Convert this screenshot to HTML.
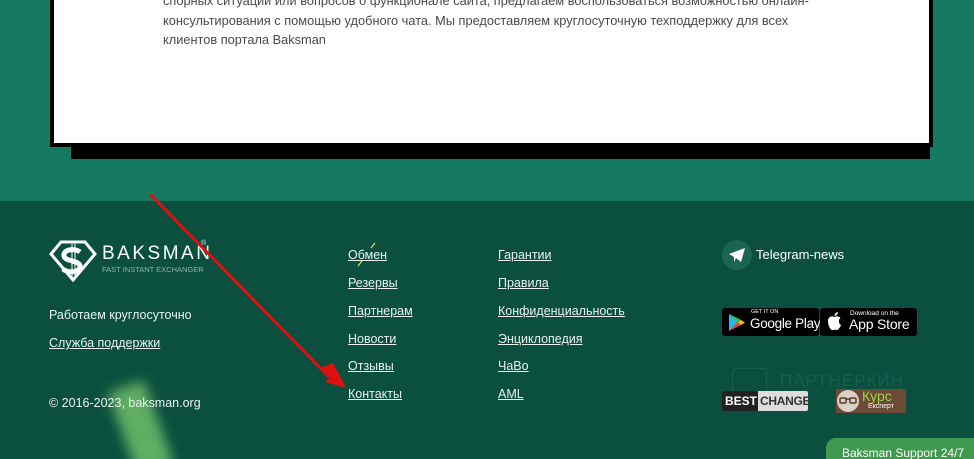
<!DOCTYPE html>
<html><head><meta charset="utf-8"><style>
*{margin:0;padding:0;box-sizing:border-box}
html,body{width:974px;height:459px;overflow:hidden}
body{position:relative;background:#167a62;font-family:"Liberation Sans",sans-serif}
.shadow{position:absolute;left:71px;top:146px;width:859px;height:13px;background:#000}
.card{position:absolute;left:50px;top:-10px;width:883px;height:157px;background:#fff;border:4px solid #000;border-top:0}
.card p{position:absolute;left:109px;top:1px;width:680px;font-size:12.8px;line-height:19.5px;color:#4a4a4a}
.foot{position:absolute;left:0;top:201px;width:974px;height:258px;background:#0b4f3f}
a,.t{position:absolute;color:#e8f2ee;font-size:12.5px;text-decoration:underline;white-space:nowrap}
.t{text-decoration:none}
</style></head><body>
<div class="shadow"></div>
<div class="card"><p>спорных ситуаций или вопросов о функционале сайта, предлагаем воспользоваться возможностью онлайн-консультирования с помощью удобного чата. Мы предоставляем круглосуточную техподдержку для всех клиентов портала Baksman</p></div>
<div class="foot"></div>
<div style="position:absolute;left:122px;top:384px;width:38px;height:90px;background:#6fbf6a;filter:blur(6px);transform:rotate(-20deg);opacity:.85"></div>
<svg style="position:absolute;left:49px;top:240px" width="48" height="42" viewBox="0 0 48 42">
<path d="M12 2 L36 2 L46 14 L24 40 L2 14 Z" fill="none" stroke="#fff" stroke-width="3"/>
<path d="M31 12 C26 8 14 9 15 16 C16 22 32 20 31 27 C30 33 18 33 14 29" fill="none" stroke="#fff" stroke-width="5"/>
<path d="M23 4 V38 M26 4 V38" stroke="#fff" stroke-width="1"/>
</svg>
<div class="t" style="left:102px;top:243px;font-size:19px;letter-spacing:2.5px;color:#fff">BAKSMAN</div>
<div class="t" style="left:102px;top:265px;font-size:7.5px;color:#8fb5a7">FAST INSTANT EXCHANGER</div>
<div class="t" style="left:201px;top:240px;font-size:7px">®</div>
<div class="t" style="left:49px;top:308px">Работаем круглосуточно</div>
<a style="left:49px;top:336px">Служба поддержки</a>
<div class="t" style="left:49px;top:396px">© 2016-2023, baksman.org</div>
<a style="left:348px;top:248px">Обмен</a>
<a style="left:348px;top:276px">Резервы</a>
<a style="left:348px;top:304px">Партнерам</a>
<a style="left:348px;top:332px">Новости</a>
<a style="left:348px;top:359px">Отзывы</a>
<a style="left:348px;top:387px">Контакты</a>
<a style="left:498px;top:248px">Гарантии</a>
<a style="left:498px;top:276px">Правила</a>
<a style="left:498px;top:304px">Конфиденциальность</a>
<a style="left:498px;top:332px">Энциклопедия</a>
<a style="left:498px;top:359px">ЧаВо</a>
<a style="left:498px;top:387px">AML</a>
<div style="position:absolute;left:722px;top:240px;width:30px;height:30px;border-radius:50%;background:#1d6553"></div>
<svg style="position:absolute;left:729px;top:248px" width="16" height="14" viewBox="0 0 16 14"><path d="M0 6 L16 0 L12 14 L7 10 L5 14 L5 9 Z" fill="#fff"/></svg>
<div class="t" style="left:756px;top:247px;font-size:13px;color:#fff">Telegram-news</div>
<div style="position:absolute;left:722px;top:308px;width:97px;height:28px;background:#000;border-radius:3px"></div>
<svg style="position:absolute;left:728px;top:313px" width="18" height="19" viewBox="0 0 18 19"><path d="M1 1 L1 18 L10 9.5Z" fill="#2bb5e8"/><path d="M1 1 L13 7 L10 9.5Z" fill="#34c759"/><path d="M1 18 L13 12 L10 9.5Z" fill="#ea4335"/><path d="M13 7 L17 9.5 L13 12 L10 9.5Z" fill="#fbbc04"/></svg>
<div class="t" style="left:751px;top:309px;font-size:5.5px;color:#fff">GET IT ON</div>
<div class="t" style="left:750px;top:316px;font-size:13.5px;color:#fff;letter-spacing:-.3px">Google Play</div>
<div style="position:absolute;left:820px;top:308px;width:97px;height:28px;background:#000;border-radius:3px"></div>
<svg style="position:absolute;left:827px;top:312px" width="15" height="19" viewBox="0 0 15 19"><path d="M11 0 C11 2 9 4 7.5 4 C7.5 2 9 0.5 11 0Z M7.5 5 C5 3.5 1 4.5 1 9 C1 14 4 19 6 18 C7 17.5 8 17.5 9 18 C11 19 14 14 14 13 C11 11.5 11.5 7 13.5 6 C12 4 9.5 4 7.5 5Z" fill="#fff"/></svg>
<div class="t" style="left:850px;top:310px;font-size:6.5px;color:#fff">Download on the</div>
<div class="t" style="left:849px;top:316px;font-size:14px;color:#fff;letter-spacing:-.2px">App Store</div>
<div class="t" style="left:732px;top:368px;width:35px;height:28px;border:1px solid #1b5f4e;border-radius:3px"></div>
<div class="t" style="left:780px;top:371px;font-size:17px;color:#16604d;letter-spacing:1px">ПАРТНЕРКИН</div>
<div style="position:absolute;left:722px;top:391px;width:86px;height:20px;background:#222;border-radius:2px;overflow:hidden;font:bold 12px 'Liberation Sans',sans-serif;line-height:20px"><span style="color:#fff;padding-left:3px">BEST</span><span style="position:absolute;left:36px;top:0;width:50px;height:20px;background:#ddd;color:#333;padding-left:2px;letter-spacing:-.3px">CHANGE</span></div>
<div style="position:absolute;left:836px;top:389px;width:70px;height:24px;background:#6b4a36"></div>
<div style="position:absolute;left:837px;top:390px;width:22px;height:22px;border-radius:50%;background:#d9d0c8"></div>
<svg style="position:absolute;left:839px;top:396px" width="18" height="9" viewBox="0 0 18 9"><rect x="1" y="2" width="6" height="5" rx="1" fill="none" stroke="#5a3a2a" stroke-width="1.5"/><rect x="11" y="2" width="6" height="5" rx="1" fill="none" stroke="#5a3a2a" stroke-width="1.5"/><path d="M7 3 H11" stroke="#5a3a2a" stroke-width="1.5"/></svg>
<div class="t" style="left:862px;top:388px;font-size:14px;color:#9ed24a">Курс</div>
<div class="t" style="left:868px;top:403px;font-size:7px;color:#fff">Експерт</div>
<div style="position:absolute;left:826px;top:438px;width:160px;height:30px;background:#3f9a4f;border-radius:10px"></div>
<div class="t" style="left:842px;top:446px;font-size:12px;color:#fff">Baksman Support 24/7</div>
<svg style="position:absolute;left:0;top:0" width="974" height="459"><line x1="150" y1="194" x2="330" y2="378" stroke="#e01010" stroke-width="3"/><path d="M346 388 L320 368 L333 363Z M346 388 L325 382 L338 372Z" fill="#e01010"/><path d="M375 243 L371 248 M362 261 L358 266" stroke="#e4e060" stroke-width="1.2"/></svg>
</body></html>
